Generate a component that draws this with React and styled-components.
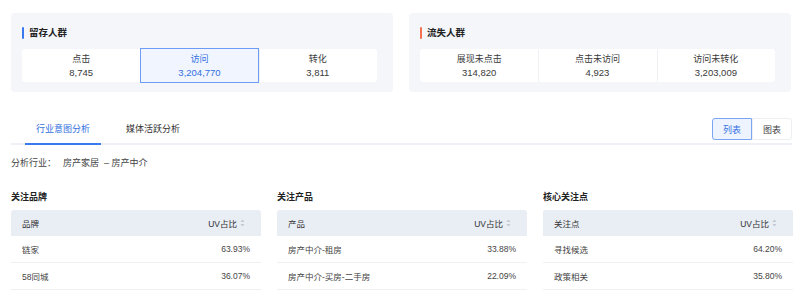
import React from 'react'
import styled, { createGlobalStyle } from 'styled-components'

const Global = createGlobalStyle`
  body {
    margin: 0;
    background: #fff;
    font-family: "Liberation Sans", "Noto Sans CJK SC", sans-serif;
    color: #333;
  }
`

const Page = styled.div`
  padding: 13px 8px 0 11px;
`

const TopRow = styled.div`
  display: grid;
  grid-template-columns: 382px 382px;
  gap: 16px;
`

const Panel = styled.div`
  background: #f5f6fa;
  border-radius: 4px;
  height: 79px;
  box-sizing: border-box;
  padding: 14px 16px 10px 11px;
`

const PanelTitle = styled.div`
  display: flex;
  align-items: center;
  gap: 5px;
  font-size: 9.5px;
  font-weight: 600;
  color: #222;
  line-height: 12px;
  &::before {
    content: '';
    width: 2px;
    height: 12px;
    border-radius: 1px;
    background: ${(p) => p.accent};
  }
`

const StatBox = styled.div`
  margin-top: 10px;
  height: 33px;
  background: #fff;
  border-radius: 3px;
  display: grid;
  grid-template-columns: repeat(3, 1fr);
`

const Stat = styled.div`
  display: flex;
  flex-direction: column;
  align-items: center;
  justify-content: center;
  text-align: center;
  color: ${(p) => (p.active ? '#3370e0' : '#3a3a3a')};
  background: ${(p) => (p.active ? '#f0f5ff' : 'transparent')};
  border: 1px solid ${(p) => (p.active ? '#6d9cf5' : 'transparent')};
  border-left: 1px solid ${(p) => (p.active ? '#6d9cf5' : p.first ? 'transparent' : '#eef0f4')};
  margin: ${(p) => (p.active ? '-1px 0' : '0')};
`

const StatLabel = styled.div`
  font-size: 9px;
  line-height: 13px;
`

const StatValue = styled.div`
  font-size: 9.5px;
  line-height: 13px;
`

const TabBar = styled.div`
  margin-top: 15px;
  display: flex;
  align-items: flex-end;
  justify-content: space-between;
  border-bottom: 2px solid #eef0f5;
  height: 36px;
`

const Tabs = styled.div`
  display: flex;
  gap: 14px;
  margin-left: 14px;
`

const Tab = styled.div`
  padding: 0 11px;
  height: 30px;
  line-height: 28px;
  font-size: 9px;
  color: ${(p) => (p.active ? '#3370e0' : '#333')};
  border-bottom: 2px solid ${(p) => (p.active ? '#3a7af0' : 'transparent')};
  margin-bottom: -2px;
  box-sizing: border-box;
`

const Toggle = styled.div`
  display: flex;
  margin-bottom: 3px;
`

const ToggleBtn = styled.div`
  width: 40px;
  height: 22px;
  box-sizing: border-box;
  display: flex;
  align-items: center;
  justify-content: center;
  font-size: 9px;
  color: ${(p) => (p.active ? '#3370e0' : '#444')};
  background: ${(p) => (p.active ? '#eef4ff' : '#fff')};
  border: 1px solid ${(p) => (p.active ? '#7aa5f5' : '#eceef2')};
  border-radius: ${(p) => (p.active ? '3px 0 0 3px' : '0 3px 3px 0')};
`

const Industry = styled.div`
  margin-top: 11px;
  font-size: 9px;
  color: #444;
  line-height: 14px;
  display: flex;
  gap: 7px;
`

const Tables = styled.div`
  margin-top: 20px;
  display: grid;
  grid-template-columns: repeat(3, 250px);
  gap: 16px;
`

const Section = styled.div``

const SectionTitle = styled.div`
  font-size: 9px;
  font-weight: 600;
  color: #222;
  line-height: 14px;
  margin-bottom: 6px;
`

const Row = styled.div`
  display: flex;
  justify-content: space-between;
  align-items: center;
  height: 27px;
  padding: 0 11px;
  font-size: 8.5px;
  color: #444;
  border-bottom: 1px solid #f0f1f4;
  box-sizing: border-box;
`

const HeadRow = styled(Row)`
  height: 26px;
  background: #e9edf4;
  color: #333;
  border-bottom: none;
  border-radius: 3px 3px 0 0;
  padding-right: 16px;
`

const Sort = styled.span`
  display: inline-flex;
  align-items: center;
  gap: 3px;
`

const SortIcon = () => (
  <svg width="5" height="8" viewBox="0 0 5 8">
    <path d="M2.5 0.5 L4.5 3 H0.5 Z" fill="#c3c8d2" />
    <path d="M2.5 7.5 L4.5 5 H0.5 Z" fill="#c3c8d2" />
  </svg>
)

const tables = [
  {
    title: '关注品牌',
    col: '品牌',
    rows: [['链家', '63.93%'], ['58同城', '36.07%']],
  },
  {
    title: '关注产品',
    col: '产品',
    rows: [['房产中介-租房', '33.88%'], ['房产中介-买房-二手房', '22.09%']],
  },
  {
    title: '核心关注点',
    col: '关注点',
    rows: [['寻找候选', '64.20%'], ['政策相关', '35.80%']],
  },
]

const stats = {
  keep: [['点击', '8,745'], ['访问', '3,204,770', true], ['转化', '3,811']],
  lost: [['展现未点击', '314,820'], ['点击未访问', '4,923'], ['访问未转化', '3,203,009']],
}

const StatList = ({ items }) => (
  <StatBox>
    {items.map(([label, value, active], i) => (
      <Stat key={label} active={active} first={i === 0}>
        <StatLabel>{label}</StatLabel>
        <StatValue>{value}</StatValue>
      </Stat>
    ))}
  </StatBox>
)

export default function App() {
  return (
    <Page>
      <Global />
      <TopRow>
        <Panel>
          <PanelTitle accent="#3a7af0">留存人群</PanelTitle>
          <StatList items={stats.keep} />
        </Panel>
        <Panel>
          <PanelTitle accent="#f5714f">流失人群</PanelTitle>
          <StatList items={stats.lost} />
        </Panel>
      </TopRow>

      <TabBar>
        <Tabs>
          <Tab active>行业意图分析</Tab>
          <Tab>媒体活跃分析</Tab>
        </Tabs>
        <Toggle>
          <ToggleBtn active>列表</ToggleBtn>
          <ToggleBtn>图表</ToggleBtn>
        </Toggle>
      </TabBar>

      <Industry>
        <span>分析行业：</span>
        <span>房产家居 &nbsp;– 房产中介</span>
      </Industry>

      <Tables>
        {tables.map((t) => (
          <Section key={t.title}>
            <SectionTitle>{t.title}</SectionTitle>
            <HeadRow>
              <span>{t.col}</span>
              <Sort>UV占比<SortIcon /></Sort>
            </HeadRow>
            {t.rows.map(([name, v]) => (
              <Row key={name}>
                <span>{name}</span>
                <span>{v}</span>
              </Row>
            ))}
          </Section>
        ))}
      </Tables>
    </Page>
  )
}
